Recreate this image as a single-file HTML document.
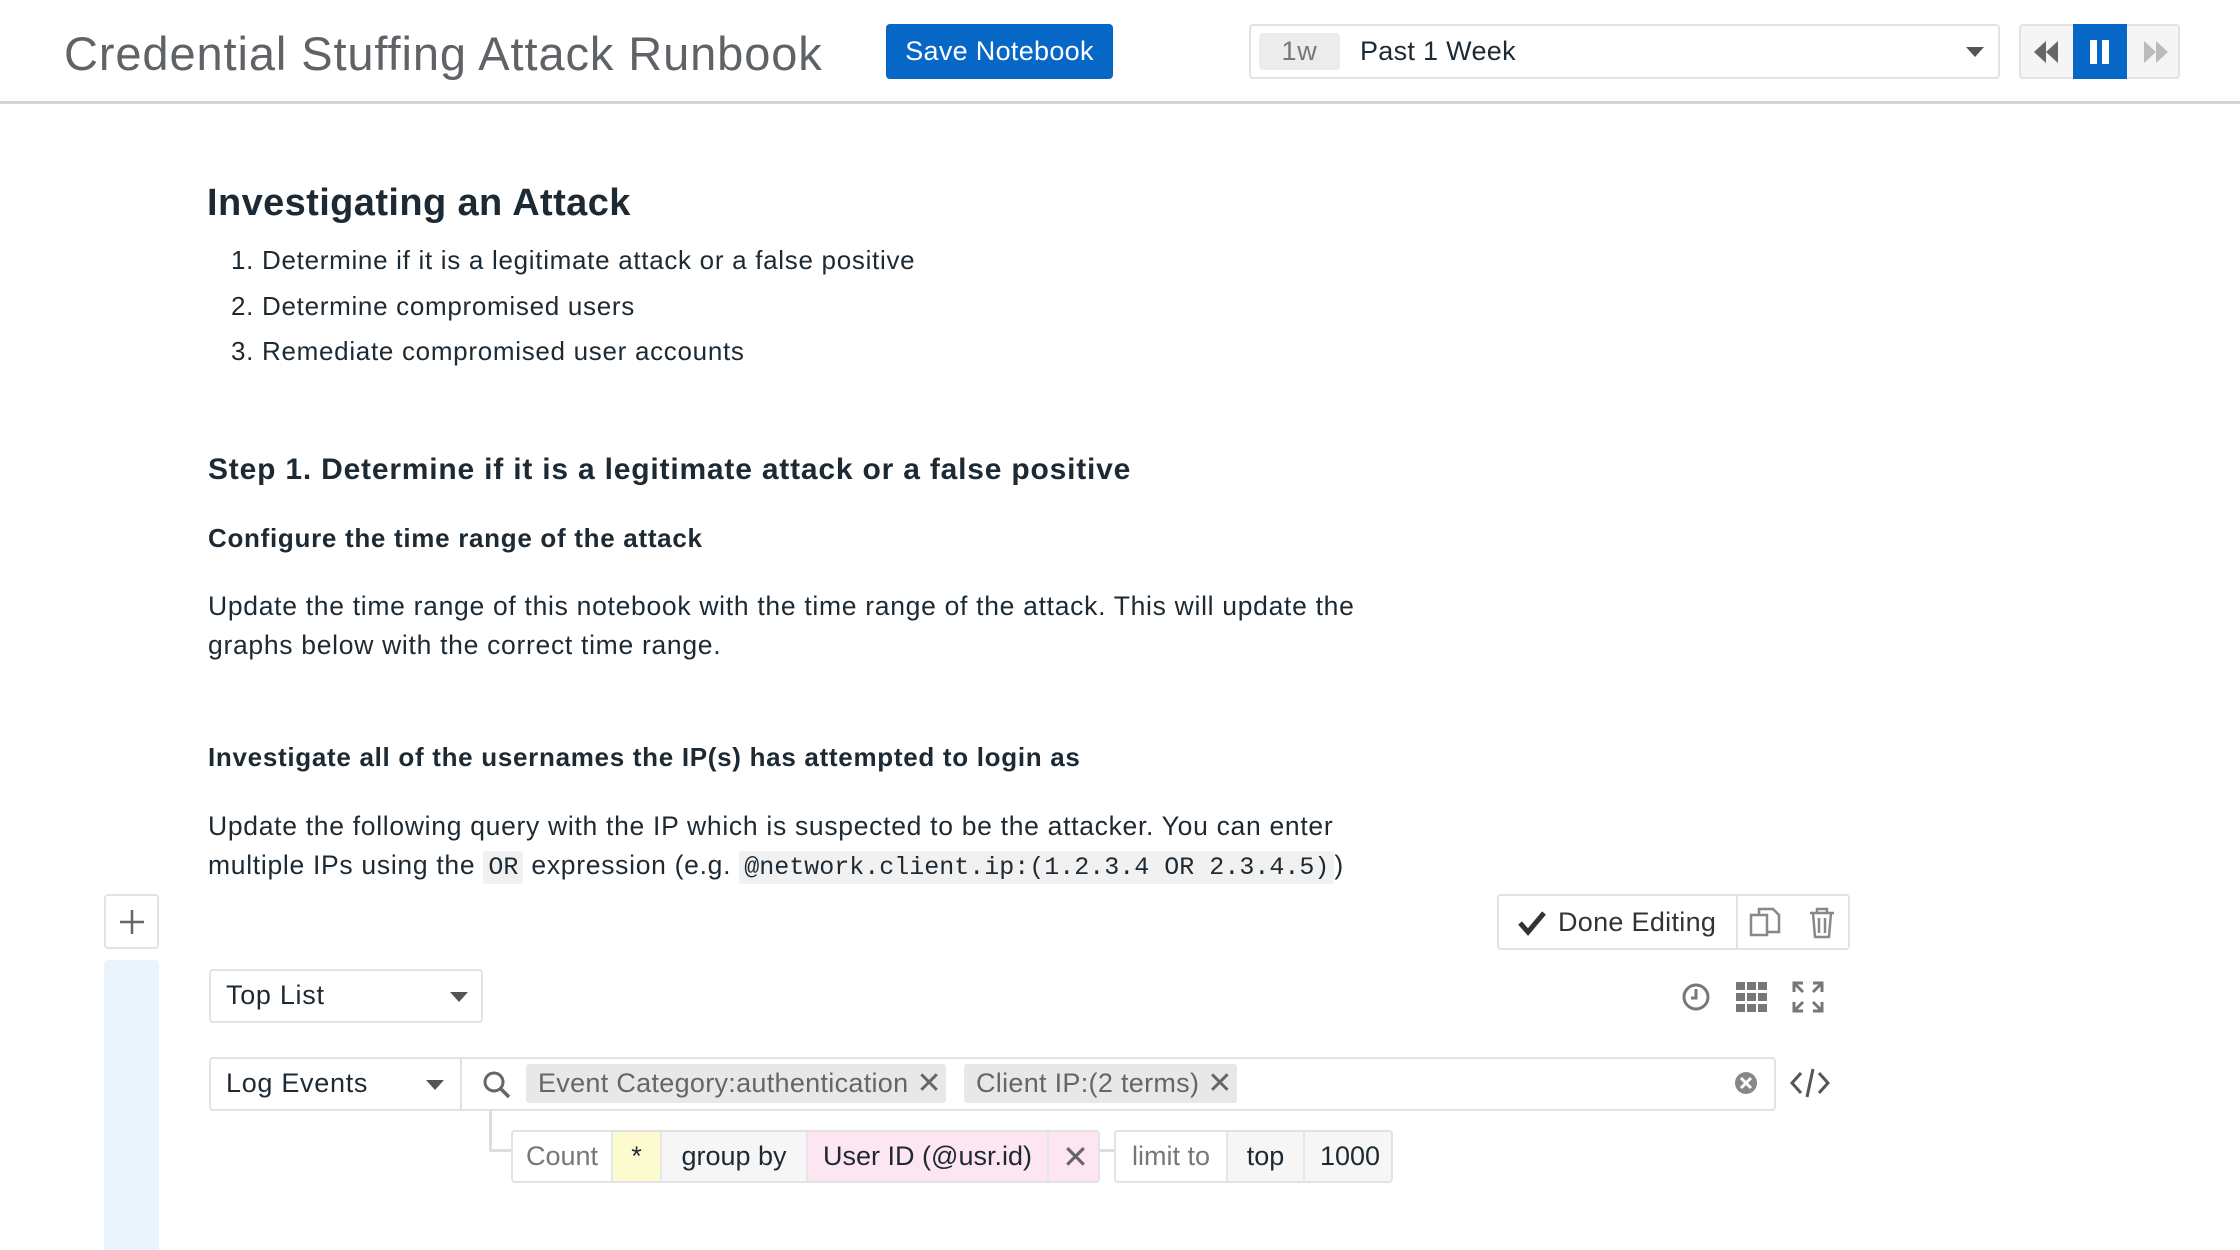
<!DOCTYPE html>
<html><head><meta charset="utf-8"><style>
*{box-sizing:border-box;margin:0;padding:0}
body{width:2240px;height:1250px;overflow:hidden;background:#fff;font-family:"Liberation Sans",sans-serif;color:#1d2a33;position:relative;letter-spacing:0.7px}
.a{position:absolute}
.hdr{left:0;top:0;width:2240px;height:104px;border-bottom:3px solid #d4d4d4;background:#fff}
.box{border:2px solid #e2e2e2;border-radius:4px;background:#fff}
.t{white-space:nowrap}
code{font-family:"Liberation Mono",monospace;background:#f1f1f1;padding:2px 5px;border-radius:3px;font-size:25px;letter-spacing:0}
.cell{position:absolute;top:0;height:100%;display:flex;align-items:center;justify-content:center;font-size:27px;border-right:2px solid #e6e6e6;letter-spacing:0}
</style></head><body>
<div class="a hdr"></div>
<div class="a t" style="left:64px;top:26px;font-size:47px;color:#5f6266;letter-spacing:0.9px">Credential Stuffing Attack Runbook</div>
<div class="a t" style="left:886px;top:24px;width:227px;height:55px;background:#0667c6;border-radius:4px;color:#fff;font-size:27px;display:flex;align-items:center;justify-content:center;letter-spacing:0.3px">Save Notebook</div>
<div class="a box" style="left:1249px;top:24px;width:751px;height:55px"></div>
<div class="a t" style="left:1259px;top:33px;width:81px;height:37px;background:#ececec;border-radius:4px;color:#777;font-size:27px;display:flex;align-items:center;justify-content:center">1w</div>
<div class="a t" style="left:1360px;top:36px;font-size:27px;letter-spacing:0.3px">Past 1 Week</div>
<svg class="a" style="left:1964px;top:45px" width="22" height="14"><path d="M2 2h18l-9 10z" fill="#555"/></svg>
<div class="a box" style="left:2019px;top:24px;width:161px;height:55px;background:#f5f5f5"></div>
<svg class="a" style="left:2030px;top:38px" width="32" height="28"><path d="M16 3L4 14l12 11zM28 3L16 14l12 11z" fill="#666"/></svg>
<div class="a" style="left:2073px;top:24px;width:54px;height:55px;background:#0667c6"></div>
<div class="a" style="left:2090px;top:40px;width:7px;height:24px;background:#fff"></div>
<div class="a" style="left:2102px;top:40px;width:7px;height:24px;background:#fff"></div>
<svg class="a" style="left:2140px;top:38px" width="32" height="28"><path d="M4 3l12 11L4 25zM16 3l12 11-12 11z" fill="#bbb"/></svg>

<div class="a t" style="left:207px;top:182px;font-size:38px;font-weight:bold;letter-spacing:0.4px">Investigating an Attack</div>
<div class="a t" style="left:231px;top:238px;font-size:26px;line-height:45.7px">1. Determine if it is a legitimate attack or a false positive<br>2. Determine compromised users<br>3. Remediate compromised user accounts</div>
<div class="a t" style="left:208px;top:453px;font-size:30px;font-weight:bold;letter-spacing:0.8px">Step 1. Determine if it is a legitimate attack or a false positive</div>
<div class="a t" style="left:208px;top:523px;font-size:26px;font-weight:bold">Configure the time range of the attack</div>
<div class="a t" style="left:208px;top:587px;font-size:26.5px;line-height:38.5px">Update the time range of this notebook with the time range of the attack. This will update the<br>graphs below with the correct time range.</div>
<div class="a t" style="left:208px;top:742px;font-size:26px;font-weight:bold">Investigate all of the usernames the IP(s) has attempted to login as</div>
<div class="a t" style="left:208px;top:807px;font-size:26.5px;line-height:38.5px">Update the following query with the IP which is suspected to be the attacker. You can enter<br>multiple IPs using the <code>OR</code> expression (e.g. <code>@network.client.ip:(1.2.3.4 OR 2.3.4.5)</code>)</div>

<div class="a box" style="left:104px;top:894px;width:55px;height:55px;display:flex;align-items:center;justify-content:center"><svg width="26" height="26"><path d="M13 1v24M1 13h24" stroke="#666" stroke-width="2.5"/></svg></div>
<div class="a" style="left:104px;top:960px;width:55px;height:290px;background:#e9f4fc;border-radius:4px 4px 0 0"></div>

<div class="a box" style="left:1497px;top:894px;width:353px;height:56px"></div>
<svg class="a" style="left:1517px;top:910px" width="30" height="26"><path d="M3 13l8 9L27 3" stroke="#333" stroke-width="5" fill="none"/></svg>
<div class="a t" style="left:1558px;top:907px;font-size:27px;color:#333;letter-spacing:0.3px">Done Editing</div>
<div class="a" style="left:1736px;top:894px;width:2px;height:56px;background:#e2e2e2"></div>
<svg class="a" style="left:1748px;top:906px" width="34" height="34"><rect x="3" y="9" width="16" height="20" fill="none" stroke="#888" stroke-width="2.5"/><path d="M11 9V3h14l6 6v17H19" fill="none" stroke="#888" stroke-width="2.5"/></svg>
<svg class="a" style="left:1807px;top:906px" width="30" height="34"><path d="M3 7h24M10 7V3h10v4M6 7l2 24h14l2-24M12 12v15M18 12v15" fill="none" stroke="#888" stroke-width="2.5"/></svg>

<div class="a box" style="left:209px;top:969px;width:274px;height:54px"></div>
<div class="a t" style="left:226px;top:980px;font-size:27px">Top List</div>
<svg class="a" style="left:448px;top:990px" width="22" height="14"><path d="M2 2h18l-9 10z" fill="#555"/></svg>
<svg class="a" style="left:1680px;top:981px" width="32" height="32"><circle cx="16" cy="16" r="12" fill="none" stroke="#777" stroke-width="3"/><path d="M16 8v9h-5" stroke="#777" stroke-width="3" fill="none"/></svg>
<svg class="a" style="left:1736px;top:981px" width="32" height="32"><g fill="#777"><rect x="0" y="1" width="9" height="8"/><rect x="11" y="1" width="9" height="8"/><rect x="22" y="1" width="9" height="8"/><rect x="0" y="12" width="9" height="8"/><rect x="11" y="12" width="9" height="8"/><rect x="22" y="12" width="9" height="8"/><rect x="0" y="23" width="9" height="8"/><rect x="11" y="23" width="9" height="8"/><rect x="22" y="23" width="9" height="8"/></g></svg>
<svg class="a" style="left:1792px;top:981px" width="32" height="32"><path d="M2 11V2h9M2 2l9 9M21 2h9v9M30 2l-9 9M2 21v9h9M2 30l9-9M30 21v9h-9M30 30l-9-9" stroke="#777" stroke-width="3" fill="none"/></svg>

<div class="a box" style="left:209px;top:1057px;width:1567px;height:54px"></div>
<div class="a t" style="left:226px;top:1068px;font-size:27px">Log Events</div>
<svg class="a" style="left:424px;top:1078px" width="22" height="14"><path d="M2 2h18l-9 10z" fill="#555"/></svg>
<div class="a" style="left:460px;top:1057px;width:2px;height:54px;background:#e2e2e2"></div>
<svg class="a" style="left:482px;top:1070px" width="30" height="30"><circle cx="12" cy="12" r="9" fill="none" stroke="#666" stroke-width="3"/><path d="M18 18l9 9" stroke="#666" stroke-width="3.5"/></svg>
<div class="a t" style="left:526px;top:1064px;width:420px;height:39px;background:#e8e8e8;border-radius:3px;font-size:27px;color:#666;display:flex;align-items:center;padding-left:12px;letter-spacing:0.3px">Event Category:authentication <span style="margin-left:8px;font-size:30px">✕</span></div>
<div class="a t" style="left:964px;top:1064px;width:273px;height:39px;background:#e8e8e8;border-radius:3px;font-size:27px;color:#666;display:flex;align-items:center;padding-left:12px;letter-spacing:0.3px">Client IP:(2 terms) <span style="margin-left:8px;font-size:30px">✕</span></div>
<svg class="a" style="left:1734px;top:1071px" width="24" height="24"><circle cx="12" cy="12" r="11" fill="#888"/><path d="M7 7l10 10M17 7L7 17" stroke="#fff" stroke-width="3"/></svg>
<svg class="a" style="left:1790px;top:1066px" width="40" height="34"><path d="M11 7L2 17l9 10M29 7l9 10-9 10M23 3l-6 28" stroke="#555" stroke-width="3" fill="none"/></svg>

<div class="a" style="left:489px;top:1111px;width:3px;height:40px;background:#ddd"></div>
<div class="a" style="left:489px;top:1149px;width:24px;height:3px;background:#ddd"></div>
<div class="a box" style="left:511px;top:1130px;width:589px;height:53px;overflow:hidden">
<div class="cell" style="left:0;width:100px;color:#777">Count</div>
<div class="cell" style="left:100px;width:49px;background:#fcfbcf">*</div>
<div class="cell" style="left:149px;width:146px;background:#f6f6f6">group by</div>
<div class="cell" style="left:295px;width:241px;background:#fde6f1">User ID (@usr.id)</div>
<div class="cell" style="left:536px;width:53px;background:#fde6f1;border:none;color:#666;font-size:32px">✕</div>
</div>
<div class="a" style="left:1100px;top:1149px;width:14px;height:3px;background:#ddd"></div>
<div class="a box" style="left:1114px;top:1130px;width:279px;height:53px;overflow:hidden">
<div class="cell" style="left:0;width:112px;color:#777">limit to</div>
<div class="cell" style="left:112px;width:77px;background:#f6f6f6">top</div>
<div class="cell" style="left:189px;width:90px;background:#f6f6f6;border:none">1000</div>
</div>
</body></html>
